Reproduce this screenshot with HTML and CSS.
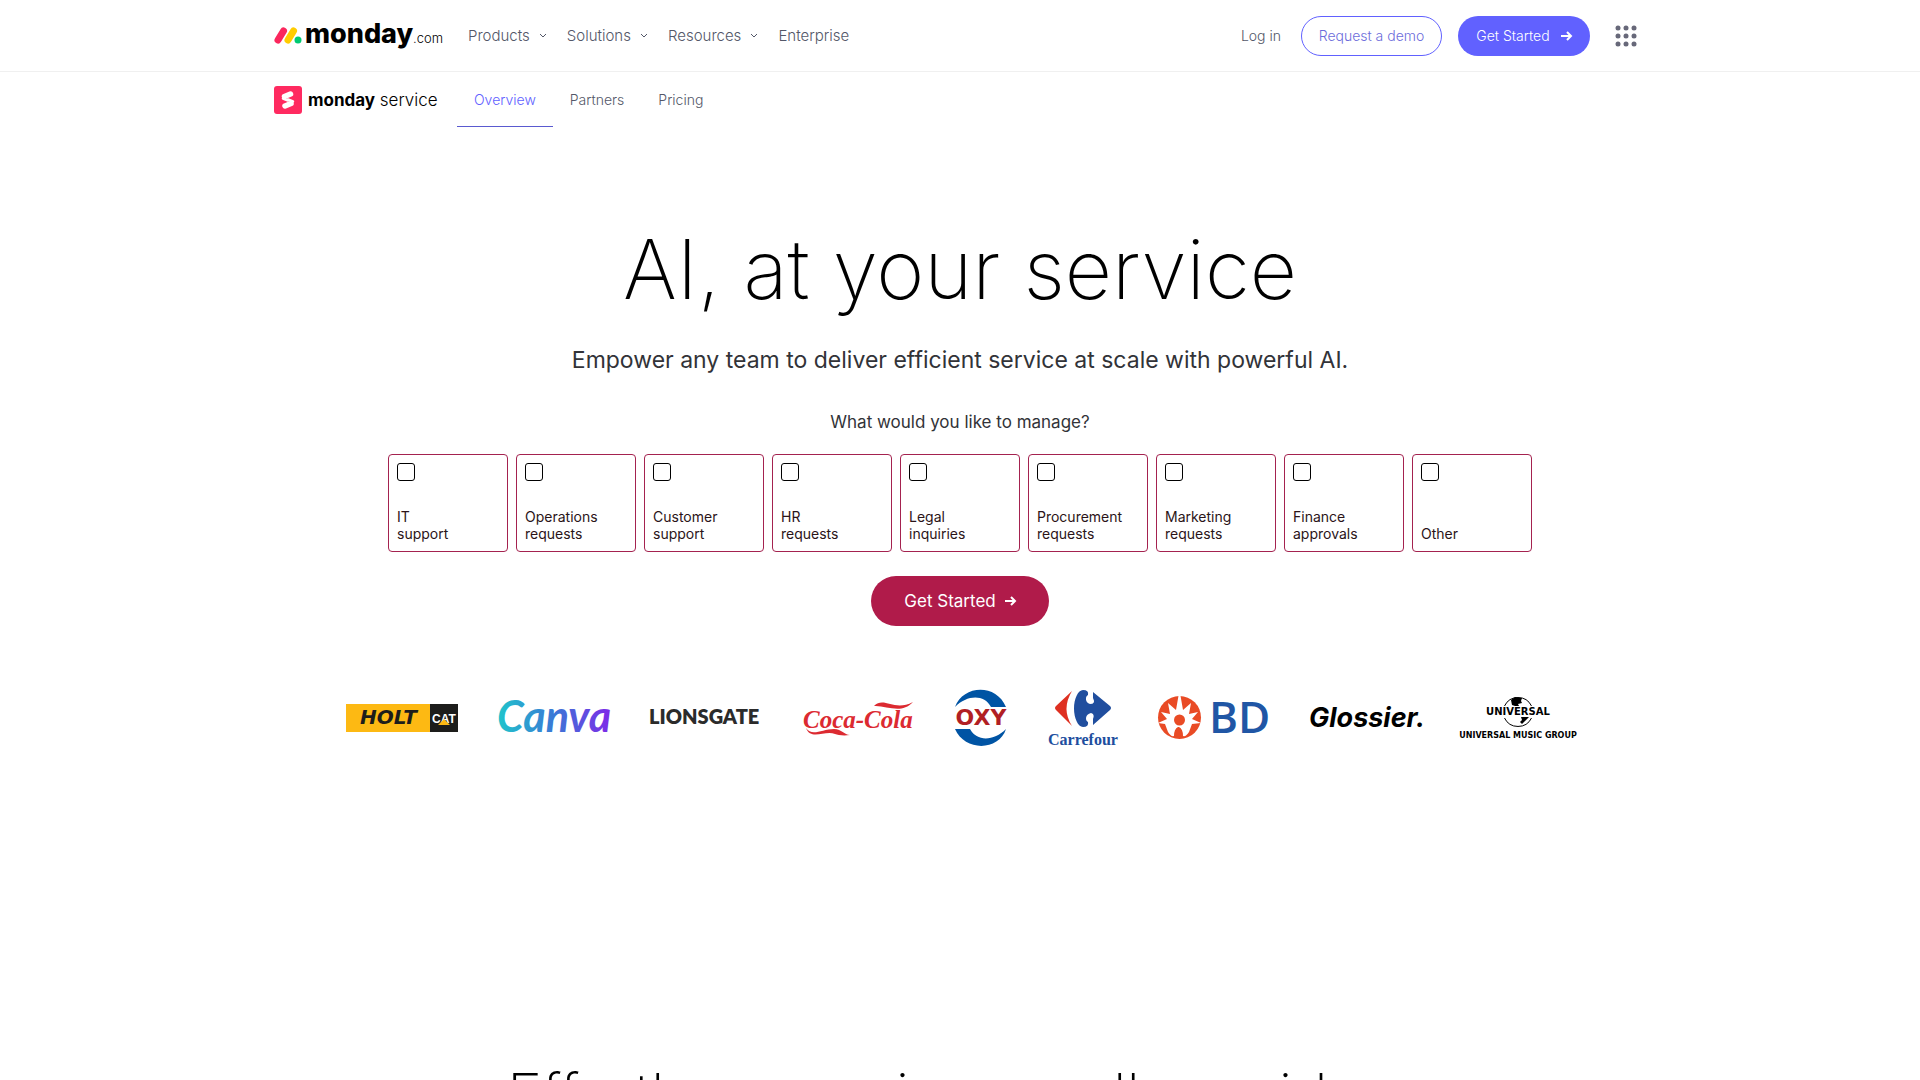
FILE: index.html
```html
<!DOCTYPE html>
<html lang="en">
<head>
    <meta charset="UTF-8">
    <meta name="viewport" content="width=device-width, initial-scale=1.0">
    <title>monday service</title>
    <link rel="stylesheet" href="styles.css">
</head>
<body>

<header class="header">
    <div class="container header-row">
        <a href="#" class="logo" aria-label="monday.com">
            <svg width="169" height="32" viewBox="0 0 169 32">
                <path d="M4 20 L9.500 11" stroke="#fb275d" stroke-width="7" stroke-linecap="round"/>
                <path d="M14 20 L19.500 11" stroke="#fc0" stroke-width="7" stroke-linecap="round"/>
                <circle cx="24" cy="20" r="3.5" fill="#00ca72"/>
                <text x="31" y="23" class="logo-monday">monday</text>
                <text x="139" y="23" class="logo-com">.com</text>
            </svg>
        </a>
        <nav class="nav">
            <a href="#">Products <svg class="chevron" viewBox="0 0 8 5"><path d="M1 1l3 3 3-3"/></svg></a>
            <a href="#">Solutions <svg class="chevron" viewBox="0 0 8 5"><path d="M1 1l3 3 3-3"/></svg></a>
            <a href="#">Resources <svg class="chevron" viewBox="0 0 8 5"><path d="M1 1l3 3 3-3"/></svg></a>
            <a href="#">Enterprise</a>
        </nav>
        <div class="header-actions">
            <a href="#" class="login">Log in</a>
            <button class="btn btn-outline">Request a demo</button>
            <button class="btn btn-primary">Get Started
                <svg class="arrow" viewBox="0 0 12 10"><path d="M1 5h10M7 1l4 4-4 4"/></svg>
            </button>
            <button class="apps" aria-label="Apps">
                <svg width="22" height="22" viewBox="0 0 22 22">
                    <circle cx="3" cy="3" r="2.5"/><circle cx="11" cy="3" r="2.5"/><circle cx="19" cy="3" r="2.5"/>
                    <circle cx="3" cy="11" r="2.5"/><circle cx="11" cy="11" r="2.5"/><circle cx="19" cy="11" r="2.5"/>
                    <circle cx="3" cy="19" r="2.5"/><circle cx="11" cy="19" r="2.5"/><circle cx="19" cy="19" r="2.5"/>
                </svg>
            </button>
        </div>
    </div>
</header>

<div class="subnav">
    <div class="container subnav-row">
        <a href="#" class="product" aria-label="monday service">
            <svg width="28" height="28" viewBox="0 0 28 28">
                <rect width="28" height="28" rx="3" fill="#ff2a60"/>
                <path d="M10.5 10.5l6-2.500M11 20l6-2.500" stroke="#fff" stroke-width="5.5" stroke-linecap="round"/>
                <path d="M9 12.500l5 2M14 13.500l5 2" stroke="#fff" stroke-width="2.5" stroke-linecap="round"/>
            </svg>
            <span><b>monday</b> service</span>
        </a>
        <nav class="tabs">
            <a href="#" class="active">Overview</a>
            <a href="#">Partners</a>
            <a href="#">Pricing</a>
        </nav>
    </div>
</div>

<main>
    <section class="hero">
        <h1>AI, at your service</h1>
        <p class="subtitle">Empower any team to deliver efficient service at scale with powerful AI.</p>
        <p class="question">What would you like to manage?</p>

        <div class="tiles">
            <label class="tile"><input type="checkbox"><span>IT<br>support</span></label>
            <label class="tile"><input type="checkbox"><span>Operations<br>requests</span></label>
            <label class="tile"><input type="checkbox"><span>Customer<br>support</span></label>
            <label class="tile"><input type="checkbox"><span>HR<br>requests</span></label>
            <label class="tile"><input type="checkbox"><span>Legal<br>inquiries</span></label>
            <label class="tile"><input type="checkbox"><span>Procurement<br>requests</span></label>
            <label class="tile"><input type="checkbox"><span>Marketing<br>requests</span></label>
            <label class="tile"><input type="checkbox"><span>Finance<br>approvals</span></label>
            <label class="tile"><input type="checkbox"><span>Other</span></label>
        </div>

        <button class="btn-hero">Get Started
            <svg class="arrow" viewBox="0 0 12 10"><path d="M1 5h10M7 1l4 4-4 4"/></svg>
        </button>
    </section>

    <!-- Customer logos -->
    <section class="brands">
        <svg width="112" height="56" viewBox="0 0 112 56">
            <rect y="14" width="84" height="28" fill="#fdb913"/>
            <rect x="84" y="14" width="28" height="28" fill="#1d1d1b"/>
            <text x="14" y="34" class="b-holt">HOLT</text>
            <text x="86" y="33" class="b-cat">CAT</text>
            <path d="M92 35l6-6 6 6z" fill="#fdb913"/>
        </svg>
        <svg width="112" height="56" viewBox="0 0 112 56">
            <defs>
                <linearGradient id="canva" gradientUnits="userSpaceOnUse" x1="0" y1="0" x2="112" y2="0">
                    <stop offset="0" stop-color="#20c4cb"/>
                    <stop offset="0.5" stop-color="#3a78d6"/>
                    <stop offset="1" stop-color="#7d2ae8"/>
                </linearGradient>
            </defs>
            <text x="-1" y="42" class="b-canva" fill="url(#canva)">Canva</text>
        </svg>
        <svg width="112" height="56" viewBox="0 0 112 56">
            <text x="-1" y="34" class="b-lions">LIONSGATE</text>
        </svg>
        <svg width="112" height="56" viewBox="0 0 112 56">
            <text x="1" y="38" class="b-coke">Coca-Cola</text>
            <path d="M4 38c6 9 16 1 28 1c8 0 10 6 16 6c-7 1-12 0-15-1c-10-4-24 7-29-6z" fill="#dc2a31"/>
            <path d="M72 16c10-10 20 6 39-4c-12 13-27 3-39 4z" fill="#dc2a31"/>
        </svg>
        <svg width="54" height="56" viewBox="1 0 54 56">
            <path d="M2 17C10-5 43-7 53 17H38C31 4 14 5 2 17z" fill="#0054a4"/>
            <path d="M53 39C46 61 12 62 2 39H17C24 52 41 51 53 39z" fill="#0054a4"/>
            <text x="28" y="35" text-anchor="middle" class="b-oxy">OXY</text>
        </svg>
        <svg width="70" height="56" viewBox="0 0 70 56">
            <path d="M24 1L8 16q-2 2 0 4L24 36q-11-17 0-35z" fill="#de3021"/>
            <path d="M35 0c-5 0-9 9-9 18.500s4 18.500 9 18.500q6 0 5-5c-3-1-3-8 3-9q4 1 2 6l0 6 17-15q2-2 0-4L45 2l0 6q3 6-3 6c-5-1-5-8-2-9q1-5-5-5z" fill="#204e9e"/>
            <text x="35" y="55" text-anchor="middle" class="b-carrefour">Carrefour</text>
        </svg>
        <svg width="112" height="56" viewBox="0 0 112 56">
            <circle cx="21.500" cy="27.500" r="21.500" fill="#e94b25"/>
            <path d="M0 33l9-4-6-7 9 2-2-11 8 7 3.500-20 3.500 20 8-7-2 11 9-2-6 7 9 4-9 1-3 8q-3 5-6 4q0-7-4-9h-1q-4 2-4 9-3 1-6-4l-3-8z" fill="#fff"/>
            <circle cx="21.500" cy="30" r="5.500" fill="#e94b25"/>
            <text x="51" y="43" class="b-bd">BD</text>
        </svg>
        <svg width="112" height="56" viewBox="0 0 112 56">
            <text x="-1" y="37" class="b-glossier">Glossier.</text>
        </svg>
        <svg width="112" height="56" viewBox="0 0 112 56">
            <path d="M42.500 16a15 15 0 0 1 27 0M42.500 28a15 15 0 0 0 27 0" fill="none" stroke="#000"/>
            <path d="M49 10l4-3 7 1-1 3 1 2-4 1 1 2h-4l-3-1zM59 27l8 0-7 7-2-2 2-2z"/>
            <text x="56" y="25" text-anchor="middle" class="b-universal">UNIVERSAL</text>
            <text x="56" y="48" text-anchor="middle" class="b-umg">UNIVERSAL MUSIC GROUP</text>
        </svg>
    </section>

    <section class="next">
        <h2>Effortless service on all providers</h2>
    </section>
</main>

</body>
</html>
```
FILE: styles.css
```css
* {
    box-sizing: border-box;
}

html {
    overflow: hidden;
    height: 100%;
}

body {
    margin: 0;
    height: 100%;
    overflow: hidden;
    font-family: Inter, "Open Sans", sans-serif;
    color: #323338;
    background-color: #fff;
}

a {
    color: inherit;
    text-decoration: none;
}

button {
    font-family: inherit;
    cursor: pointer;
}

svg {
    overflow: visible;
}

.container {
    max-width: 1372px;
    margin: 0 auto;
}

/* Header */
.header {
    border-bottom: 1px solid #f0f0f0;
}

.header-row {
    display: flex;
    align-items: center;
    height: 71px;
}

.logo {
    display: flex;
    width: 169px;
}

.logo-monday {
    font-size: 27px;
    font-weight: 800;
}

.logo-com {
    font-size: 13px;
    font-weight: 300;
}

.nav {
    display: flex;
    gap: 20px;
    margin-left: 25px;
    font-size: 15px;
    font-weight: 300;
    color: #535768;
}

.nav a {
    display: flex;
    align-items: center;
    gap: 9px;
}

.chevron {
    width: 8px;
    height: 5px;
    fill: none;
    stroke: #535768;
}

.header-actions {
    display: flex;
    align-items: center;
    gap: 16px;
    margin-left: auto;
    margin-right: 9px;
}

.login {
    font-size: 14px;
    font-weight: 300;
    color: #535768;
    margin-right: 4px;
}

.btn {
    display: flex;
    align-items: center;
    justify-content: center;
    gap: 10px;
    height: 40px;
    border-radius: 40px;
    font-size: 14px;
    font-weight: 300;
    padding: 0 16px;
}

.btn-outline {
    width: 141px;
    border: 1px solid #6161ff;
    color: #6c6cdb;
    background-color: #fff;
}

.btn-primary {
    width: 132px;
    border: none;
    color: #fff;
    background-color: #6161ff;
}

.arrow {
    width: 12px;
    height: 10px;
    fill: none;
    stroke: #fff;
    stroke-width: 2;
}

.apps {
    display: flex;
    border: none;
    padding: 0;
    margin-left: 9px;
    background: none;
    fill: #676879;
}

/* Product bar */
.subnav-row {
    display: flex;
    height: 55px;
}

.product {
    display: flex;
    align-items: center;
    gap: 6px;
    width: 183px;
    font-size: 17px;
    font-weight: 300;
    color: #000;
}

.product b {
    font-weight: 700;
}

.tabs {
    display: flex;
    font-size: 14px;
    font-weight: 300;
    color: #535768;
}

.tabs a {
    display: flex;
    align-items: center;
    padding: 0 17px;
}

.tabs .active {
    color: #6161ff;
    border-bottom: 1px solid #5a5ad0;
}

/* Hero */
.hero {
    display: flex;
    flex-direction: column;
    align-items: center;
    padding-top: 95px;
    text-align: center;
}

h1 {
    margin: 0;
    font-size: 82px;
    line-height: 96px;
    font-weight: 200;
    color: #000;
}

.subtitle {
    margin: 24px 0 0;
    font-size: 23px;
    line-height: 36px;
}

.question {
    margin: 32px 0 0;
    font-size: 17px;
    line-height: 24px;
}

.tiles {
    display: flex;
    gap: 8px;
    margin-top: 20px;
}

.tile {
    display: flex;
    flex-direction: column;
    justify-content: space-between;
    width: 120px;
    height: 98px;
    padding: 8px 8px 9px;
    border: 1px solid #a4224f;
    border-radius: 4px;
    font-size: 14px;
    line-height: 17px;
    text-align: left;
    color: #2b1418;
    cursor: pointer;
}

.tile input {
    appearance: none;
    width: 18px;
    height: 18px;
    margin: 0;
    border: 1px solid #000;
    border-radius: 3px;
}

.btn-hero {
    display: flex;
    align-items: center;
    justify-content: center;
    gap: 8px;
    width: 178px;
    height: 50px;
    margin-top: 24px;
    border: none;
    border-radius: 50px;
    font-size: 17px;
    color: #fff;
    background-color: #b01b4a;
}

/* Brands */
.brands {
    display: flex;
    justify-content: center;
    gap: 40px;
    margin-top: 64px;
}

.b-holt {
    font: italic bold 20px "DejaVu Sans", sans-serif;
    fill: #1d1d1b;
}

.b-cat {
    font: bold 12px "Liberation Sans", sans-serif;
    fill: #fff;
}

.b-canva {
    font: italic bold 43px Lato, sans-serif;
}

.b-lions {
    font: 800 20px Lato, sans-serif;
    fill: #2b2b2b;
}

.b-coke {
    font: italic bold 25px "Liberation Serif", serif;
    fill: #dc2a31;
}

.b-oxy {
    font: bold 22px "DejaVu Sans", sans-serif;
    fill: #b11f24;
}

.b-carrefour {
    font: bold 16px "Liberation Serif", serif;
    fill: #204e9e;
}

.b-bd {
    font: 600 44px "Open Sans", sans-serif;
    fill: #2056a5;
}

.b-glossier {
    font: italic 700 27px Inter, sans-serif;
}

.b-universal {
    font: bold 10px "DejaVu Sans", sans-serif;
}

.b-umg {
    font: bold 8px "DejaVu Sans", sans-serif;
}

/* Next section */
.next {
    margin-top: 313px;
    text-align: center;
}

h2 {
    margin: 0;
    font-size: 60px;
    line-height: 72px;
    font-weight: 200;
    color: #000;
}
```
